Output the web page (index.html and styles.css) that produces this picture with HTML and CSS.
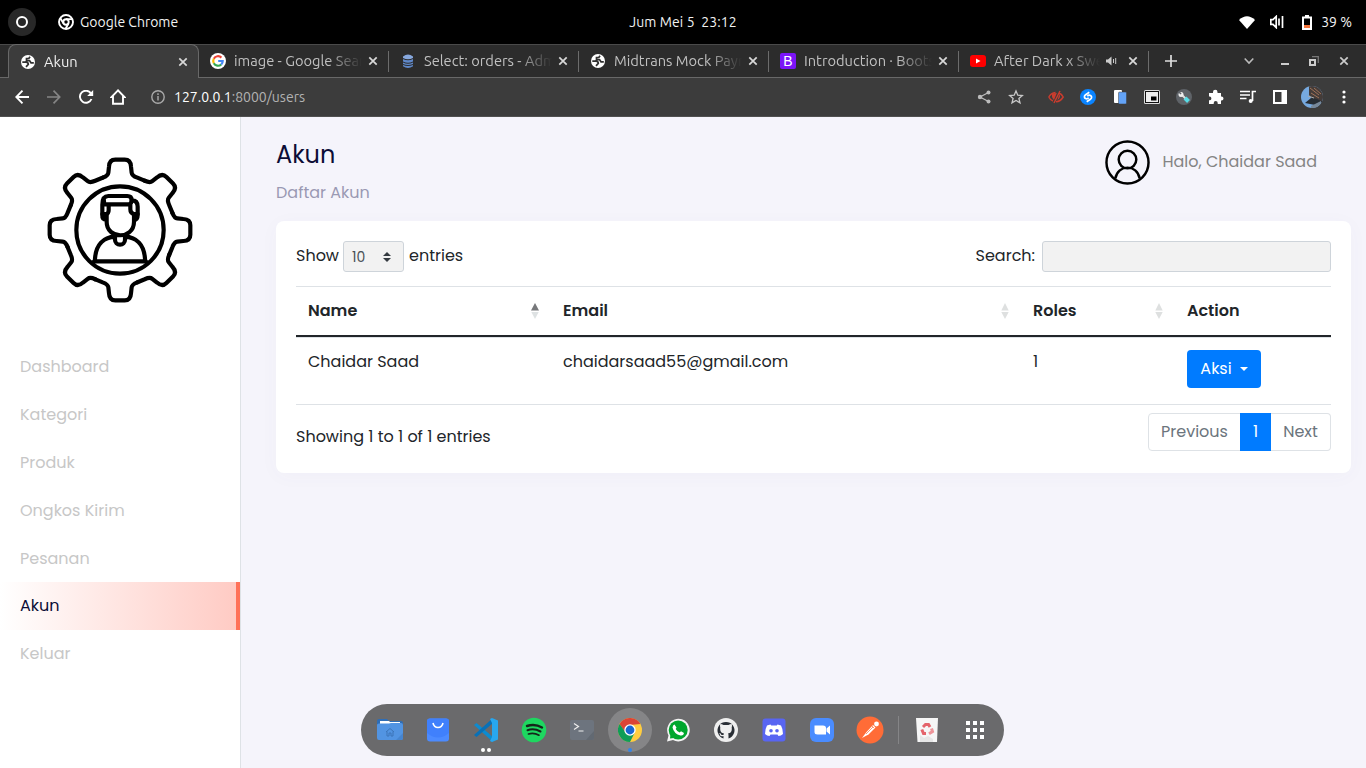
FILE: index.html
```html
<!DOCTYPE html>
<html lang="id">
<head>
<meta charset="utf-8">
<title>Akun</title>
<link rel="stylesheet" href="styles.css">
</head>
<body>
<svg width="0" height="0" class="defs">
  <symbol id="globe" viewBox="0 0 14 14"><circle cx="7" cy="7" r="7" fill="#fff"/><path d="M1.300 7.200H4.500Q7.300 7.300 7.300 9.300L5 11.800M9 1.800 8 3.300 5.500 3.600V5.600H8.500L10 7.800H12.800" fill="none" stroke="#303030" stroke-width="1.700"/></symbol>
  <symbol id="x" viewBox="0 0 10 10"><path d="M1.300 1.300 8.700 8.700 M8.700 1.300 1.300 8.700" stroke="currentColor" stroke-width="1.700" fill="none"/></symbol>
</svg>

<header class="topbar">
  <div class="top-left">
    <span class="activities"><i></i></span>
    <svg class="chrome-mono" width="16" height="16" viewBox="0 0 16 16" fill="none" stroke="#fff" stroke-width="1.900"><circle cx="8" cy="8" r="7"/><circle cx="8" cy="8" r="2.700"/><path d="M8 5.100H14.500M5.600 9.500 2.200 4M10.400 9.500 7.500 15"/></svg>
    <span class="app-name">Google Chrome</span>
  </div>
  <div class="clock">Jum Mei 5&nbsp; 23:12</div>
  <div class="top-right">
    <svg width="16" height="13" viewBox="0 0 16 13"><path d="M0 4Q8-3.500 16 4L8 13Z" fill="#fff"/></svg>
    <svg width="14" height="14" viewBox="0 0 14 14" fill="none" stroke="#fff" stroke-width="1.700"><path d="M.8 4.700H3L6.200 1.500V12.500L3 9.300H.8ZM9 3.500V10.500M12.500 1V13"/></svg>
    <svg width="10" height="15" viewBox="0 0 10 15"><path d="M3 0H7V1.500H10V15H0V1.500H3Z" fill="#fff"/><path d="M2 3.500H8V10H2Z" fill="#000"/><path d="M2 10H8V13H2Z" fill="#f3743b"/></svg>
    <span class="battery">39 %</span>
  </div>
</header>

<nav class="tabs">
  <div class="tab active"><svg width="14" height="14"><use href="#globe"/></svg><span>Akun</span><svg class="close" width="10" height="10"><use href="#x"/></svg></div>
  <div class="tab"><svg class="wide" width="16" height="16" viewBox="0 0 16 16" fill="none" stroke-width="2.200"><circle cx="8" cy="8" r="8" fill="#fff"/><path d="M11.400 4.600A4.800 4.800 0 0 0 3.800 5.700" stroke="#ea4335"/><path d="M3.800 5.700A4.800 4.800 0 0 0 3.800 10.300" stroke="#fbbc05"/><path d="M3.800 10.300A4.800 4.800 0 0 0 11.200 11.500" stroke="#34a853"/><path d="M11.200 11.500A4.800 4.800 0 0 0 12.700 8H8.200" stroke="#4285f4"/></svg><span>image - Google Search</span><svg class="close" width="10" height="10"><use href="#x"/></svg></div>
  <div class="tab"><svg width="12" height="14" viewBox="0 0 12 14"><path d="M1 2.500Q6-1.500 11 2.500V4Q6 6.500 1 4Z" fill="#86a7dd"/><path d="M1 5Q6 7.500 11 5V7.500Q6 10 1 7.500ZM1 8.500Q6 11 11 8.500V10Q6 12 1 10ZM1 11Q6 13 11 11V12.300Q6 15.500 1 12.300Z" fill="#5f88c9"/></svg><span>Select: orders - Adminer</span><svg class="close" width="10" height="10"><use href="#x"/></svg></div>
  <div class="tab"><svg width="14" height="14"><use href="#globe"/></svg><span>Midtrans Mock Payment</span><svg class="close" width="10" height="10"><use href="#x"/></svg></div>
  <div class="tab"><b class="boot">B</b><span>Introduction · Bootstrap</span><svg class="close" width="10" height="10"><use href="#x"/></svg></div>
  <div class="tab"><svg class="wide" width="16" height="12" viewBox="0 0 16 12"><rect width="16" height="12" rx="3" fill="#f00"/><path d="M6 3.500 10.500 6 6 8.500Z" fill="#fff"/></svg><span>After Dark x Sweater</span><svg class="sound" width="11" height="10" viewBox="0 0 11 10"><path d="M0 3.500H2L5.500.500V9.500L2 6.500H0Z" fill="#ccc"/><path d="M7.500 3V7M9.700 2V8" stroke="#ccc"/></svg><svg class="close" width="10" height="10"><use href="#x"/></svg></div>
  <svg class="plus" width="12" height="12" viewBox="0 0 12 12"><path d="M6 0V12M0 6H12" stroke="#ddd" stroke-width="1.700"/></svg>
  <div class="winctl">
    <svg width="10" height="10" viewBox="0 0 10 10"><path d="M.7 2.500 5 7 9.300 2.500" fill="none" stroke="#bbb" stroke-width="1.600"/></svg>
    <svg width="8" height="10" viewBox="0 0 8 10"><path d="M0 8H8" stroke="#ccc" stroke-width="2"/></svg>
    <svg width="10" height="10" viewBox="0 0 10 10" fill="none"><path d="M3 .700H9.300V7" stroke="#777" stroke-width="1.300"/><path d="M1 4H6V9H1Z" stroke="#ccc" stroke-width="2"/></svg>
    <svg width="10" height="10"><use href="#x"/></svg>
  </div>
</nav>

<div class="toolbar">
  <div class="nav-buttons">
    <svg width="14" height="14" viewBox="0 0 14 14" fill="none" stroke="#fff" stroke-width="1.900"><path d="M14 7H1.500M7.500 .7 1.300 7 7.500 13.300"/></svg>
    <svg width="14" height="14" viewBox="0 0 14 14" fill="none" stroke="#858585" stroke-width="1.700"><path d="M0 7H12.500M6.500 .7 12.700 7 6.500 13.300"/></svg>
    <svg width="15" height="14" viewBox="0 0 15 14" fill="none" stroke="#fff" stroke-width="1.900"><path d="M12.500 9A6 6 0 1 1 12 3.500"/><path d="M14.200 0V6H8.200Z" fill="#fff" stroke="none"/></svg>
    <svg width="16" height="16" viewBox="0 0 16 16" fill="none" stroke="#fff" stroke-width="1.900"><path d="M8 1.300 1.500 8H3V14.800H13V8H14.500Z"/></svg>
  </div>
  <div class="address"><svg width="14" height="14" viewBox="0 0 14 14" fill="none" stroke="#aaa" stroke-width="1.400"><circle cx="7" cy="7" r="6.200"/><path d="M7 6V10.500M7 3.200V5"/></svg><span><em>127.0.0.1</em>:8000/users</span></div>
  <div class="extensions">
    <svg width="16" height="16" viewBox="0 0 16 16" fill="#bbb"><circle cx="4" cy="8" r="2.200"/><circle cx="12.500" cy="3.500" r="2"/><circle cx="12.500" cy="12.500" r="2"/><path d="M12.500 3.500 4 8 12.500 12.500" fill="none" stroke="#bbb" stroke-width="1.300"/></svg>
    <svg width="16" height="16" viewBox="0 0 16 16"><path d="M8 2 9.800 6.200 14.300 6.500 10.900 9.400 12 13.800 8 11.400 4 13.800 5.100 9.400 1.700 6.500 6.200 6.200Z" fill="none" stroke="#c8c8c8" stroke-width="1.300"/></svg>
    <svg class="after-star" width="16" height="16" viewBox="0 0 16 16" fill="none" stroke="#c93c2e" stroke-width="1.500"><path d="M.8 8Q3 4 7.500 3.500M10.500 3.500Q13.500 5 15.200 8Q12.500 12.500 8 12.700M.8 8Q2.500 11.300 5 12M12 2 6 14"/><path d="M4.300 4.500 8.800 4 6 11Q3 8 4.300 4.500ZM10.700 7 12 5.500Q12.500 9 9.500 11Z" fill="#c93c2e" stroke="none"/></svg>
    <svg width="16" height="16" viewBox="0 0 16 16" fill="none"><circle cx="8" cy="8" r="8" fill="#0a84ff"/><path d="M9.300 3.200 5.600 5.700C3.700 7 4.300 8.900 5.500 9.600S8.200 9.400 8.700 8.800M6.700 12.800 10.400 10.300C12.300 9 11.700 7.100 10.500 6.400S7.800 6.600 7.300 7.200" stroke="#fff" stroke-width="1.700"/></svg>
    <svg width="16" height="16" viewBox="0 0 16 16"><rect x="2" y="1" width="8" height="13" rx="1" fill="#fff"/><rect x="6.500" y="3" width="8" height="12" rx="1" fill="#63a3f7" stroke="#3c3c3c" stroke-width=".5"/></svg>
    <svg width="16" height="16" viewBox="0 0 16 16"><rect y="1" width="16" height="14" rx="1.500" fill="#ddd"/><rect x="1.500" y="2.500" width="13" height="11" fill="#eee" stroke="#111"/><rect x="7" y="7.500" width="5.500" height="4" fill="#000"/></svg>
    <svg width="16" height="16" viewBox="0 0 16 16"><circle cx="8" cy="8" r="8" fill="#5f6368"/><path d="M5 5 10 10" stroke="#ddd" stroke-width="2"/><circle cx="5" cy="5.500" r="2.500" fill="#eee"/><path d="M3 3 5 5" stroke="#5f6368" stroke-width="1.600"/><path d="M9 9 12.500 12.500" stroke="#58dce5" stroke-width="4"/></svg>
    <svg width="16" height="16" viewBox="0 0 16 16" fill="#fff"><path d="M1 4H5V3A2.200 2.200 0 0 1 9.500 3V4H13V7.500H13.500A2 2 0 0 1 13.500 11.500H13V15H9.700V14A2 2 0 0 0 5.700 14V15H1V11.300H2A2 2 0 0 0 2 7.500H1Z"/></svg>
    <svg width="16" height="16" viewBox="0 0 16 16" fill="none" stroke="#fff" stroke-width="1.700"><path d="M0 2.500H10M0 6H10M0 9.500H6.500M12.500 12V2.500H16"/><circle cx="10.700" cy="12" r="2" fill="#fff" stroke="none"/></svg>
    <svg width="16" height="16" viewBox="0 0 16 16"><path fill-rule="evenodd" d="M1 1H15V15H1ZM3 3V13H9.500V3Z" fill="#fff"/></svg>
    <svg class="avatar" width="22" height="22" viewBox="0 0 22 22"><clipPath id="av"><circle cx="11" cy="11" r="11"/></clipPath><g clip-path="url(#av)"><rect width="22" height="22" fill="#76a9df"/><path d="M8 0H22V17L12 14 8 9Z" fill="#443c39"/><path d="M4 17 10 12 16 13 22 16 14 19Z" fill="#262d34"/><path d="M9 2 18 9M13 2 20 8M10 7 18 12" stroke="#a07258"/><path d="M7 10 13 12" stroke="#aaa"/><path d="M10 20 20 15V22H10Z" fill="#789"/></g></svg>
    <svg class="dots" width="4" height="14" viewBox="0 0 4 14" fill="#fff"><circle cx="2" cy="2" r="1.600"/><circle cx="2" cy="7" r="1.600"/><circle cx="2" cy="12" r="1.600"/></svg>
  </div>
</div>

<div class="page">
  <aside class="sidebar">
    <svg class="logo" width="240" height="200" viewBox="0 0 720 600" fill="none" stroke="#000" stroke-width="12.500" stroke-linejoin="round" stroke-linecap="round">
      <g transform="translate(360 330)">
        <g id="teeth">
          <path id="tooth" d="M-52-157Q-36-163-35-172L-33-190Q-32-211-14-211H14Q32-211 33-190L35-172Q36-163 52-157L70-149.500Q78-146 74.200-147.800"/>
          <use href="#tooth" transform="rotate(45)"/><use href="#tooth" transform="rotate(90)"/><use href="#tooth" transform="rotate(135)"/><use href="#tooth" transform="rotate(180)"/><use href="#tooth" transform="rotate(225)"/><use href="#tooth" transform="rotate(270)"/><use href="#tooth" transform="rotate(315)"/>
        </g>
        <circle r="131"/>
        <path d="M-75 94V86C-72 44-50 22-15 20M75 94V86C72 44 50 22 15 20M-78 94H78M-15 17V29A15 15 0 0 0 15 29V17"/>
        <path d="M-40-44V-24C-40 28 41 30 42-24V-44M-40-30Q-54-32-53-44V-76Q-53-102-35-102H22Q35-102 35-89Q53-89 53-70V-44Q53-31 42-30"/>
        <path d="M-48-88V-77H28Q35-80 35-89M-53-48H-42Q-34-49-34-60V-76M53-48H42Q31-50 31-62V-78"/>
      </g>
    </svg>
    <ul class="menu">
      <li>Dashboard</li><li>Kategori</li><li>Produk</li><li>Ongkos Kirim</li><li>Pesanan</li><li class="current">Akun</li><li>Keluar</li>
    </ul>
  </aside>
  <main>
    <div class="heading">
      <div><h1>Akun</h1><p>Daftar Akun</p></div>
      <div class="user">
        <svg width="45" height="45" viewBox="0 0 46 46" fill="none" stroke="#000" stroke-width="2.500"><circle cx="23" cy="23" r="21.500"/><circle cx="23" cy="20" r="9"/><path d="M10.500 39.500C13 24.500 33 24.500 35.500 39.500"/></svg>
        <span>Halo, Chaidar Saad</span>
      </div>
    </div>
    <section class="card">
      <div class="controls">
        <div class="length"><span>Show</span><span class="select"><span>10</span><svg width="8" height="10" viewBox="0 0 8 10" fill="#343a40"><path d="M0 4 4 0 8 4ZM0 6H8L4 10Z"/></svg></span><span>entries</span></div>
        <div class="search"><span>Search:</span><input type="text" aria-label="Search"></div>
      </div>
      <div class="row head">
        <div>Name<svg width="8" height="16" viewBox="0 0 8 16"><path d="M0 7.500 4 0 8 7.500Z" fill="#77787b"/><path d="M.3 9H7.700L4 16Z" fill="#dee2e3"/></svg></div>
        <div>Email<svg width="8" height="16" viewBox="0 0 8 16" fill="#dee0e0"><path d="M.3 7.500 4 0 7.700 7.500ZM.3 9H7.700L4 16Z"/></svg></div>
        <div>Roles<svg width="8" height="16" viewBox="0 0 8 16" fill="#dee0e0"><path d="M.3 7.500 4 0 7.700 7.500ZM.3 9H7.700L4 16Z"/></svg></div>
        <div>Action</div>
      </div>
      <div class="row data">
        <div>Chaidar Saad</div><div>chaidarsaad55@gmail.com</div><div>1</div>
        <div><button>Aksi<svg width="8" height="4" viewBox="0 0 8 4"><path d="M0 0H8L4 4Z" fill="#fff"/></svg></button></div>
      </div>
      <div class="foot">
        <span>Showing 1 to 1 of 1 entries</span>
        <div class="pager"><span>Previous</span><span class="on">1</span><span>Next</span></div>
      </div>
    </section>
  </main>
</div>

<div class="dock">
  <span><svg width="28" height="24" viewBox="0 0 28 24"><path d="M1 3Q1 1 3 1H11L13 3H25Q27 3 27 5V9H1Z" fill="#2f6db5"/><path d="M4 3H13L14 4H24V8H4Z" fill="#fff"/><path d="M1 7Q1 5.500 3 5.500H13L15 5H25Q27 5 27 7V20Q27 22 25 22H3Q1 22 1 20Z" fill="#5294e2"/><path d="M10 14 14 10.500 18 14M11 13.500V18H13V15H15V18H17V13.500" fill="none" stroke="#3c74b8"/><path d="M27 15V20Q27 22 25 22H20Z" fill="#4685d0"/></svg></span>
  <span><svg width="22" height="24" viewBox="0 0 22 24"><rect y=".5" width="22" height="23" rx="3" fill="#4c8bff"/><path d="M0 3Q0 .500 3 .500H19Q22 .500 22 3V15Q11 24 0 15Z" fill="#4080fc"/><path d="M6 5Q7 9.500 11 9.500T16 5" fill="none" stroke="#fff" stroke-width="1.600"/></svg></span>
  <span><svg width="26" height="26" viewBox="0 0 26 26"><path d="M1 8 3.500 6 20 20V25Z" fill="#0d8bd0"/><path d="M1 18 3.500 20 20 6V1Z" fill="#0871b8"/><path d="M19 1 25 3.500V22.500L19 25 17 24 19 20V6L17 2Z" fill="#28a7ef"/></svg><i class="pair"></i></span>
  <span><svg width="26" height="26" viewBox="0 0 26 26" fill="none" stroke="#15251a" stroke-linecap="round"><circle cx="13" cy="13" r="12.300" fill="#1ed760" stroke="none"/><path d="M6 9Q14 6.500 21 10.500" stroke-width="2.400"/><path d="M6.500 13.200Q13 11 19.500 14.500" stroke-width="2"/><path d="M7.500 17Q13 15.500 18 18.200" stroke-width="1.700"/></svg></span>
  <span><svg width="26" height="22" viewBox="0 0 26 22"><rect x="1" y="1" width="24" height="20" rx="2" fill="#6d747e"/><path d="M25 12V19Q25 21 23 21H17Z" fill="#626972"/><path d="M5 4.500 9.500 7.500 5 10.500M9.500 12H14.500" fill="none" stroke="#eee" stroke-width="1.200"/></svg></span>
  <span class="focus"><svg width="24" height="24" viewBox="0 0 24 24"><circle cx="12" cy="12" r="12" fill="#ffcd40"/><path d="M1.600 6A12 12 0 0 1 22.400 6L12 7 7 14Z" fill="#db4437"/><path d="M1.600 6A12 12 0 0 0 12 24L16.500 15H8Z" fill="#0f9d58"/><circle cx="12" cy="12" r="5.700" fill="#fff"/><circle cx="12" cy="12" r="4.400" fill="#1967d2"/></svg><i class="run"></i></span>
  <span><svg width="24" height="24" viewBox="0 0 24 24"><path d="M1 23.500 2.500 17.500A11.300 11.300 0 1 1 7 22Z" fill="#f4f4f4"/><circle cx="12.200" cy="12" r="9.500" fill="#00a72e"/><path d="M4 20.500 4.500 16 8 20Z" fill="#00a72e"/><path d="M8.500 6.500 10.500 9.500 9.700 11Q11 13.500 13.700 14.500L15 13.300 18 15Q17.500 18 14.500 17.500Q8 16 6.500 9.500Q6.800 7 8.500 6.500Z" fill="#fff"/></svg></span>
  <span><svg width="24" height="24" viewBox="0 0 24 24"><circle cx="12" cy="12" r="12" fill="#efefef"/><path d="M9.500 20.500V18Q6 19 5.500 15.500L4.500 15Q7 14.700 7.500 17L9.600 17Q9.500 16 10 15.500Q5.500 15 6.300 9.500Q5.700 7.500 6.400 6Q8 6 9.500 7H14.500Q16 6 17.600 6Q18.300 7.500 17.700 9.500Q18.500 15 14 15.500Q14.500 16 14.500 17.500V20.500A8.500 8.500 0 1 0 9.500 20.500Z" fill="#292e35" fill-rule="evenodd"/></svg></span>
  <span><svg width="24" height="24" viewBox="0 0 24 24"><rect x=".5" y=".5" width="23" height="23" rx="3" fill="#5865f2"/><path d="M8.500 6.500 9.200 7.500H14.800L15.500 6.500 19 7.500Q21 11 21 16Q19 18 16.500 18L15.500 16.500H8.500L7.500 18Q5 18 3 16Q3 11 5 7.500Z" fill="#fff"/><circle cx="9" cy="12.700" r="1.800" fill="#5865f2"/><circle cx="15" cy="12.700" r="1.800" fill="#5865f2"/></svg></span>
  <span><svg width="24" height="24" viewBox="0 0 24 24"><rect width="24" height="24" rx="6" fill="#4a8cff"/><path d="M4.500 7.500H13Q16 7.500 16 10V16.500H7.500Q4.500 16.500 4.500 14ZM16.500 10.500 20 7.500V16.500L16.500 13.500Z" fill="#fff"/></svg></span>
  <span><svg width="28" height="28" viewBox="0 0 28 28"><circle cx="14" cy="14" r="13.500" fill="#ff6c37"/><circle cx="20.500" cy="8" r="2.400" fill="#fff"/><path d="M17 9 19.500 11.500 12.500 18.500 6 22 10.500 16Z" fill="#fff"/><path d="M16 10 18 12M10 18 17 11" stroke="#ff6c37" stroke-width=".7"/></svg></span>
  <hr>
  <span class="trash"><svg width="22" height="24" viewBox="0 0 22 24"><path d="M0 0H22L21 24H1.500Z" fill="#f6f6f6"/><path d="M4 17 8 20 12 18 17 21V24H4Z" fill="#e6e6e6"/><g fill="none" stroke-width="3"><path d="M7 9 9.500 6.500H12.500L14 9" stroke="#e4646b"/><path d="M15.500 10.500 16.500 13.500 13 15.700" stroke="#ee9499"/><path d="M10 15.500H7.500L5.800 11.500" stroke="#e4646b"/></g></svg></span>
  <span><svg width="18" height="18" viewBox="0 0 18 18" fill="#fff"><path d="M0 0h4v4H0zM7 0h4v4H7zM14 0h4v4h-4zM0 7h4v4H0zM7 7h4v4H7zM14 7h4v4h-4zM0 14h4v4H0zM7 14h4v4H7zM14 14h4v4h-4z"/></svg></span>
</div>
</body>
</html>
```
FILE: styles.css
```css
* { box-sizing: border-box; }
body { margin: 0; width: 1366px; height: 768px; overflow: hidden; background: #f5f4fb; color: #212529; font: 16px/24px Poppins, Inter, sans-serif; }
svg { flex: none; display: block; }
.defs { position: absolute; }

.topbar { height: 44px; background: #000; color: #f2f2f2; display: grid; grid-template-columns: 1fr auto 1fr; align-items: center; font: 14px/20px Ubuntu, "Noto Sans", sans-serif; }
.top-left { display: flex; align-items: center; padding-left: 8px; }
.activities { width: 28px; height: 28px; border-radius: 50%; background: #282828; display: grid; place-items: center; margin-right: 22px; }
.activities i { width: 12px; height: 12px; border: 2.500px solid #fff; border-radius: 50%; }
.app-name { margin-left: 6px; }
.clock { letter-spacing: .1px; }
.top-right { display: flex; align-items: center; justify-content: flex-end; padding-right: 14px; }
.top-right svg + svg { margin-left: 15px; }
.top-right svg:nth-child(3) { margin-left: 18px; }
.battery { margin-left: 9px; }

.tabs { height: 34px; background: #2c2c2c; border-top: 1px solid #4a4a4a; border-bottom: 1px solid #686868; display: flex; align-items: center; padding-left: 8px; color: #c0c0c0; font: 14.667px/20px Ubuntu, "Noto Sans", sans-serif; }
.tab { width: 190px; height: 32px; display: flex; align-items: center; padding: 0 10px 0 13px; position: relative; }
.tab > svg:first-child { width: 14px; }
.tab > svg.wide:first-child { width: 16px; margin: 0 -1px; }
.tab > span { flex: 1; min-width: 0; overflow: hidden; white-space: nowrap; margin-left: 9px; margin-right: 6px; -webkit-mask-image: linear-gradient(90deg, #000 calc(100% - 34px), transparent); mask-image: linear-gradient(90deg, #000 calc(100% - 34px), transparent); }
.tab:nth-child(n+2)::after { content: ""; position: absolute; right: -1px; top: 6px; width: 1px; height: 21px; background: #6c6c6c; }
.tab.active { width: 191px; height: 34px; background: #3c3c3c; border: 1px solid #686868; border-bottom: 0; border-radius: 8px 8px 0 0; color: #f0f0f0; padding: 0 10px 0 12px; }
.tab:not(.active) { left: -1px; }
.close { color: #d8d8d8; }
.sound { margin: 0 11px 0 0; }
.tab .boot { flex: none; width: 16px; height: 16px; margin: 0 -1px; border-radius: 2px; background: #7b14f7; color: #fff; font: 14px/16px "Liberation Sans", sans-serif; text-align: center; }
.plus { margin-left: 16px; }
.winctl { margin-left: auto; margin-right: 17px; display: flex; align-items: center; color: #ccc; }
.winctl svg + svg { margin-left: 20px; }
.winctl svg:nth-child(2) { margin-left: 27px; }

.toolbar { height: 39px; background: #3c3c3c; border-bottom: 1px solid #505050; display: flex; align-items: center; padding-left: 15px; }
.nav-buttons { display: flex; align-items: center; gap: 18px; width: 136px; }
.nav-buttons svg:nth-child(4) { margin-left: -2px; }
.address { display: flex; align-items: center; color: #b3b3b3; font: 14px/20px Ubuntu, "Noto Sans", sans-serif; }
.address span { margin-left: 9px; }
.address em { font-style: normal; color: #fff; }
.extensions { margin-left: auto; display: flex; align-items: center; gap: 16px; padding-right: 20px; }
.after-star { margin-left: 8px; }
.avatar { margin: 0 -3px; }
.dots { margin-left: 6px; }

.page { display: flex; height: 651px; }
.sidebar { width: 241px; background: #fff; border-right: 1px solid #dee2e6; }
.logo { margin-top: 3px; }
.menu { list-style: none; margin: 23px 0 0; padding: 0; }
.menu li { height: 47.900px; line-height: 48px; padding-left: 20px; color: #c7c7c7; }
.menu .current { color: #0c0d36; background: linear-gradient(90deg, #fff, #ffcbc4); border-right: 4px solid #ff7158; }
main { flex: 1; padding: 20px 15px 0 35px; }
.heading { display: flex; justify-content: space-between; height: 84px; }
h1 { margin: 0; font-size: 24px; line-height: 36px; font-weight: 400; color: #0c0d36; }
.heading p { margin: 8px 0 0; line-height: 24px; color: #9a99b3; }
.user { display: flex; height: 45px; margin: 3px 34px 0 0; align-items: center; color: #848484; }
.user span { margin: -2px 0 0 12px; }
.card { background: #fff; border-radius: 8px; padding: 20px; height: 252px; box-shadow: 0 3px 20px rgba(90, 80, 140, .03); }
.controls { display: flex; justify-content: space-between; height: 45px; line-height: 30px; }
.length, .search { display: flex; }
.select { width: 61px; height: 31px; margin: 0 5px 0 4px; padding: 0 12px 0 8px; background: #f2f2f2; border: 1px solid #ced4da; border-radius: 3px; display: flex; align-items: center; justify-content: space-between; font-size: 14px; color: #495057; }
.search input { width: 289px; height: 31px; margin-left: 7px; background: #f2f2f2; border: 1px solid #ced4da; border-radius: 3px; }
.row { display: grid; grid-template-columns: 255px 470px 154px 156px; border-top: 1px solid #dee2e6; }
.row > div { padding-left: 12px; }
.head { height: 51px; font-weight: 600; border-bottom: 2px solid #212529; }
.head > div { display: flex; align-items: center; justify-content: space-between; padding-right: 12px; }
.data { height: 68px; border-bottom: 1px solid #dee2e6; }
.data > div { padding-top: 12px; }
button { width: 74px; height: 38px; border: 0; border-radius: 4px; background: #007bff; color: #fff; font: inherit; display: flex; align-items: center; justify-content: center; gap: 8px; padding: 0; }
.foot { display: flex; justify-content: space-between; padding-top: 8px; }
.foot > span { padding-top: 12px; }
.pager { display: flex; height: 38px; color: #6c757d; line-height: 36px; text-align: center; }
.pager span { border: 1px solid #dee2e6; width: 93px; border-radius: 4px 0 0 4px; }
.pager .on { width: 31px; background: #007bff; border-color: #007bff; color: #fff; border-radius: 0; margin-left: -1px; }
.pager span:last-child { width: 60px; border-left: 0; border-radius: 0 4px 4px 0; }

.dock { position: absolute; left: 361px; top: 704px; width: 643px; height: 52px; border-radius: 26px; background: #6a6a6c; display: flex; align-items: center; padding-left: 5px; }
.dock > span { width: 48px; height: 44px; display: grid; place-items: center; position: relative; }
.dock .focus { width: 44px; margin: 0 2px; border-radius: 50%; background: #858587; }
.dock i { position: absolute; width: 4px; height: 4px; border-radius: 50%; }
.pair { left: 19px; bottom: 0; background: #fff; box-shadow: 6px 0 #fff; }
.dock .run { left: 20px; bottom: 0; background: #3584e4; }
.dock hr { width: 1px; height: 28px; margin: 0 0 0 4px; border: 0; background: #858587; }
.dock .trash { margin-left: 4px; }
```
